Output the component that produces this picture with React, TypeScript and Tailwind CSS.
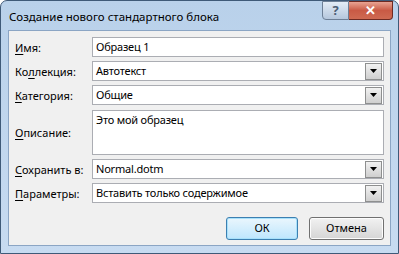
import React from "react";

const font = { fontFamily: '"Noto Sans", "Open Sans", sans-serif' };

function Label({ pre, u, post }: { pre?: string; u: string; post: string }) {
  return (
    <div className="w-[77px] shrink-0 text-[11px] text-black leading-none">
      {pre}
      <span className="underline underline-offset-2">{u}</span>
      {post}
    </div>
  );
}

function Arrow() {
  return (
    <div className="w-[17px] h-[17px] border border-[#8e8f8f] bg-gradient-to-b from-[#f2f2f2] via-[#e0e0e0] to-[#cfcfcf] flex items-center justify-center">
      <svg width="7" height="4" viewBox="0 0 7 4">
        <polygon points="0,0 7,0 3.5,4" fill="#000" />
      </svg>
    </div>
  );
}

function Field({ text, select }: { text: string; select?: boolean }) {
  return (
    <div className="flex-1 h-[20px] border border-[#abadb3] bg-white flex items-center pl-[3px] pr-[1px]">
      <span className="flex-1 text-[11px] tracking-[-0.2px] text-black">{text}</span>
      {select && <Arrow />}
    </div>
  );
}

export default function App() {
  return (
    <div className="w-[399px] h-[254px] bg-white" style={font}>
      <div className="w-[399px] h-[254px] rounded-t-[7px] border border-[#3f5a78] bg-gradient-to-b from-[#b9d1ea] to-[#c7dbf1] flex flex-col px-[7px] pb-[7px]">
        <div className="h-[29px] flex items-start">
          <div className="flex-1 pt-[10px] pl-[1px] text-[11.5px] text-black leading-none">
            Создание нового стандартного блока
          </div>
          <div className="flex h-[19px] -mr-[2px]">
            <div className="w-[27px] border border-[#6d7f96] rounded-bl-[4px] bg-gradient-to-b from-[#e3ecf6] to-[#b5c7dd] flex items-center justify-center text-[13px] font-bold text-[#4b5d74]">
              ?
            </div>
            <div className="w-[44px] border border-l-0 border-[#6e2a22] rounded-br-[4px] bg-gradient-to-b from-[#e8a493] via-[#c95a45] to-[#cf6a52] flex items-center justify-center text-[13px] font-bold text-white">
              ✕
            </div>
          </div>
        </div>
        <div className="flex-1 border border-[#8ba5c4] bg-[#f0f0f0] flex flex-col px-[6px] pt-[6px]">
          <div className="flex items-center mb-[4px]">
            <Label u="И" post="мя:" />
            <Field text="Образец 1" />
          </div>
          <div className="flex items-center mb-[4px]">
            <Label pre="Ко" u="л" post="лекция:" />
            <Field text="Автотекст" select />
          </div>
          <div className="flex items-center mb-[5px]">
            <Label u="К" post="атегория:" />
            <Field text="Общие" select />
          </div>
          <div className="flex items-center mb-[4px]">
            <Label u="О" post="писание:" />
            <div className="flex-1 h-[45px] border border-[#abadb3] bg-white pl-[3px] pt-[1px] text-[11px] tracking-[-0.2px] text-black">
              Это мой образец
            </div>
          </div>
          <div className="flex items-center mb-[4px]">
            <Label u="С" post="охранить в:" />
            <Field text="Normal.dotm" select />
          </div>
          <div className="flex items-center">
            <Label u="П" post="араметры:" />
            <Field text="Вставить только содержимое" select />
          </div>
          <div className="flex justify-end gap-[11px] mt-[14px]">
            <div className="w-[72px] h-[23px] rounded-[3px] border border-[#3c7fb1] bg-gradient-to-b from-[#eaf6fd] to-[#bee6fd] shadow-[inset_0_0_0_1px_#a8e1fb] flex items-center justify-center text-[11px] text-black">
              ОК
            </div>
            <div className="w-[75px] h-[23px] rounded-[3px] border border-[#707070] bg-gradient-to-b from-[#f2f2f2] to-[#d5d5d5] shadow-[inset_0_0_0_1px_#fcfcfc] flex items-center justify-center text-[11px] text-black">
              Отмена
            </div>
          </div>
        </div>
      </div>
    </div>
  );
}
